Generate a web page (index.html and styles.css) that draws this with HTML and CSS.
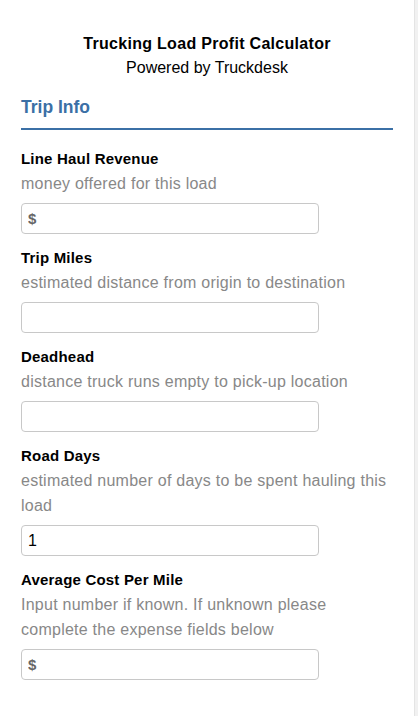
FILE: index.html
```html
<!DOCTYPE html>
<html lang="en">
<head>
<meta charset="utf-8">
<title>Trucking Load Profit Calculator</title>
<link rel="stylesheet" href="styles.css">
</head>
<body>
<div class="page">
  <main class="main">
    <header class="header">
      <h1 class="title">Trucking Load Profit Calculator</h1>
      <p class="subtitle">Powered by Truckdesk</p>
    </header>
    <section class="section">
      <h2 class="section-title">Trip Info</h2>
      <div class="fields">
        <div class="field">
          <label class="label" for="f1">Line Haul Revenue</label>
          <div class="desc">money offered for this load</div>
          <input class="input" id="f1" type="text" placeholder="$">
        </div>
        <div class="field">
          <label class="label" for="f2">Trip Miles</label>
          <div class="desc">estimated distance from origin to destination</div>
          <input class="input" id="f2" type="text">
        </div>
        <div class="field">
          <label class="label" for="f3">Deadhead</label>
          <div class="desc">distance truck runs empty to pick-up location</div>
          <input class="input" id="f3" type="text">
        </div>
        <div class="field">
          <label class="label" for="f4">Road Days</label>
          <div class="desc">estimated number of days to be spent hauling this load</div>
          <input class="input" id="f4" type="text" value="1">
        </div>
        <div class="field">
          <label class="label" for="f5">Average Cost Per Mile</label>
          <div class="desc">Input number if known. If unknown please complete the expense fields below</div>
          <input class="input" id="f5" type="text" placeholder="$">
        </div>
      </div>
    </section>
  </main>
  <div class="scrollbar"></div>
</div>
</body>
</html>
```

FILE: styles.css
```css
* { box-sizing: border-box; }
html, body { margin: 0; padding: 0; height: 100%; }
body {
  font-family: "Liberation Sans", Arial, sans-serif;
  color: #000;
  background: #fff;
}
.page {
  display: flex;
  min-height: 100%;
}
.main {
  flex: 1;
  padding: 34px 21px 0 21px;
}
.scrollbar {
  width: 4px;
  background: #f1f1f1;
  border-left: 1px solid #e4e4e4;
}
.header { text-align: center; }
.title {
  margin: 0;
  font-size: 16px;
  line-height: 20px;
  font-weight: bold;
  letter-spacing: 0.3px;
}
.subtitle {
  margin: 4px 0 0;
  font-size: 16px;
  line-height: 20px;
}
.section { margin-top: 17px; }
.section-title {
  margin: 0;
  font-size: 17.5px;
  line-height: 24px;
  font-weight: bold;
  color: #3b70a6;
  padding-bottom: 9px;
  border-bottom: 2px solid #3b70a6;
}
.fields { padding-top: 17px; }
.field {
  display: flex;
  flex-direction: column;
  align-items: flex-start;
  margin-bottom: 12px;
}
.label {
  font-size: 15px;
  line-height: 24px;
  font-weight: bold;
  letter-spacing: 0.2px;
}
.desc {
  font-size: 16px;
  line-height: 25px;
  color: #888;
  max-width: 368px;
  letter-spacing: 0.25px;
}
.input {
  margin-top: 7px;
  width: 298px;
  height: 31px;
  border: 1px solid #c8c8c8;
  border-radius: 4px;
  padding: 0 6px;
  font-family: "Liberation Sans", Arial, sans-serif;
  font-size: 16px;
  color: #000;
  background: #fff;
  outline: none;
}
.input::placeholder {
  color: #666;
  font-weight: bold;
  font-size: 15px;
}
```
